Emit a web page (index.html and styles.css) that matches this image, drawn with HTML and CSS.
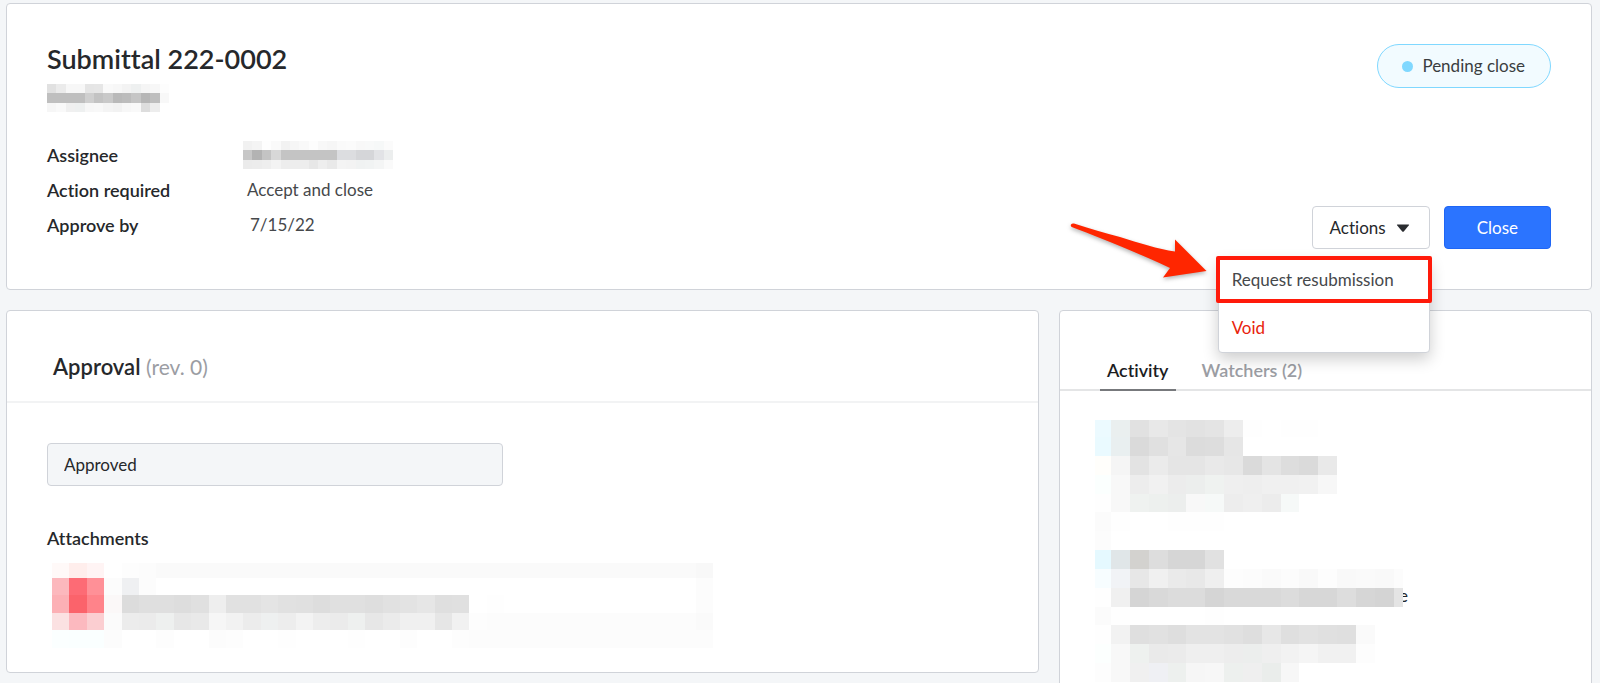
FILE: index.html
```html
<!DOCTYPE html>
<html lang="en">
<head>
<meta charset="utf-8">
<title>Submittal 222-0002</title>
<link rel="stylesheet" href="styles.css">
</head>
<body>
<main class="page">
  <section class="card summary">
    <div class="summary-info">
      <h1 class="title">Submittal 222-0002</h1>
      <svg class="mosaic mosaic-subtitle" viewBox="0 0 13 3" preserveAspectRatio="none" aria-hidden="true" data-rows="e1 eb f7 f7 e5 e6 f9 f7 f3 eef0f0 f5 f7 fd|bf bf bf bf cf c3 c9 b9 bc c5 b6 be f8|f6 f9 f0 eef0f0 f7 f8 f4 f2 f7 f9 dd ed ff"></svg>
      <dl class="facts">
        <dt>Assignee</dt>
        <dd class="fact-assignee"><svg class="mosaic mosaic-assignee" viewBox="0 0 16 3" preserveAspectRatio="none" aria-hidden="true" data-rows="f1 f4 fe fa f2 f6 f9 fd f8 f6 fa fb f8 f8f9f9 f6f8f8 fb|c7 b3 c4 d8 c4 c4 c4 c4 c4 c4 dcdde0 dcdde0 d5d6d9 d5d6d9 e2e3e6 eceeee|eb ec ee f3 ed ed ed e7 ee e9 f4 f3 f0f2f2 f1f3f3 f4f5f5 fa"></svg></dd>
        <dt>Action required</dt>
        <dd class="fact-action">Accept and close</dd>
        <dt>Approve by</dt>
        <dd class="fact-date">7/15/22</dd>
      </dl>
    </div>
    <div class="summary-side">
      <span class="status"><span class="status-dot"></span>Pending close</span>
      <div class="buttons">
        <div class="menu-anchor">
          <button class="btn" type="button" aria-haspopup="true" aria-expanded="true">Actions
            <svg class="caret" viewBox="0 0 14 8" aria-hidden="true"><path d="M1.500 .5h11q1 0 .4.8L8 7.300q-1 1-2 0L1.100 1.300Q.5 .5 1.500 .5z" fill="#2a2c30"/></svg>
          </button>
          <div class="menu" role="menu">
            <button class="menu-item menu-item-marked" type="button" role="menuitem">Request resubmission</button>
            <button class="menu-item menu-item-danger" type="button" role="menuitem">Void</button>
          </div>
          <svg class="arrow" viewBox="0 0 144 64" aria-hidden="true"><path d="M3 4.500Q4 3 6 3.500C22 9 37 13 52 17C71 23 90 29 107 31.500L107 19.500L138.500 51L95 57.500L102 48C89 42 74 35 59 29C42 22 22 14 5 7.500Q2 6.500 3 4.500z" fill="#ff2600"/></svg>
        </div>
        <button class="btn btn-primary" type="button">Close</button>
      </div>
    </div>
  </section>

  <div class="columns">
    <section class="card approval">
      <header class="approval-head"><h2 class="subtitle">Approval <span class="revision">(rev. 0)</span></h2></header>
      <div class="approval-body">
        <input class="field" type="text" value="Approved" aria-label="Approval status" readonly>
        <h3 class="label">Attachments</h3>
        <svg class="mosaic mosaic-file" viewBox="0 0.15 38 4.85" preserveAspectRatio="none" aria-hidden="true" data-rows="fff9f8 ffeeec fff4f4 ff fd fc fa*31 f8|fcb8bd fd6b75 ff9097 fc eff0f2 fc ff*31 fc|fcb0b5 fb636b ff838a fbf8f8 dc df df dd e0 ee e1 e1 e4 e1 e0 dd e0 e0 de e1 e3 e6 df e0 ff fe ff*11 fc|fbe1e2 fcb9bf fbced1 fb ec eb eef0ef e7 e9 f6 f2 ec eef0f0 ed f3 ed eb eef0ef e7 eb f0 f0 e6 f1 fd fc*12 fa|fbffff faffff faffff fc ff ff fd ff ff fc fd ff ff fe ff ff ff fe ff ff fd ff ff fd fc*14"></svg>
      </div>
    </section>

    <section class="card activity">
      <nav class="tabs" role="tablist">
        <button class="tab tab-active" type="button" role="tab" aria-selected="true">Activity</button>
        <button class="tab" type="button" role="tab" aria-selected="false">Watchers (2)</button>
      </nav>
      <div class="feed">
        <span class="feed-tail">e</span>
        <svg class="mosaic mosaic-feed" viewBox="0.15 0.1 16.35 13.9" preserveAspectRatio="none" aria-hidden="true" data-rows="ecfaff eaefef e1 e8 e4 e2 e4 ed fe ff fe fe|eafaff e9eff0 da e0 e6 dc dd e6|fffefb f5 e3 eb e5 e5 e9 e7 da e4 dd da e9|fbfffe f8 ed f1 ec eceeed eff2f0 ef ee f0 f0 f1 f7|fe f8 eff2f0 edf0ee eceeed f8 f6f9f8 ed ef ec f6f9f8|fb fe ff ff fe fe fe|fc|e5f9ff e0e6e8 d3d2cf dd d6 d6 e1|f7fdff f1f3f6 e7 f0 ea e8 ef fd fc fa fc f9 fd f9 fa f9 fc|fe f0 d5 d9 dc dc d5 d9 d9 d9 dc d7 d7 dd d6 d4 e4|fb fe ff ff ff ff fe|fe f2 df e1 de e3 e3 e1 de e7 df e2 e0 df fa|fcfffe f8 eef1ef ea eb ef ef ed eceeed ef f2 f5 f1 f1 fd|fd f8 f0 eff0f4 edf0ee f6 f7 edf0ee ef eaedeb f7"></svg>
      </div>
    </section>
  </div>
</main>
<script src="mosaic.js"></script>
</body>
</html>
```

FILE: styles.css
```css
* { box-sizing: border-box; }

body {
  margin: 0;
  background: #f4f6f8;
  color: #26282b;
  font-family: Lato, "Open Sans", sans-serif;
  font-size: 17px;
  line-height: 24px;
  font-variant-ligatures: none;
}

button, input { font: inherit; color: inherit; }
h1, h2, h3, dl, dd { margin: 0; }

.page {
  height: 100vh;
  overflow: hidden;
  padding: 3px 8px 0 6px;
}

.card {
  background: #fff;
  border: 1px solid #d0d3d9;
  border-radius: 4px;
}

.mosaic { display: block; shape-rendering: crispEdges; }

.summary {
  display: flex;
  justify-content: space-between;
  padding: 40px;
  min-height: 287px;
}

.title {
  font-size: 27px;
  line-height: 30px;
  font-weight: 600;
}

.mosaic-subtitle { width: 122px; height: 28px; margin-top: 10px; }

.facts {
  display: grid;
  grid-template-columns: 196px auto;
  grid-auto-rows: 35px;
  align-items: center;
  margin-top: 25px;
}

.facts dt, .label { font-size: 18px; font-weight: 600; }
.facts dd { color: #46484b; }
.mosaic-assignee { width: 150px; height: 28px; }
.facts .fact-action { padding-left: 4px; }
.facts .fact-date { padding-left: 7px; }

.summary-side {
  display: flex;
  flex-direction: column;
  align-items: flex-end;
  justify-content: space-between;
}

.status {
  display: flex;
  align-items: center;
  gap: 9px;
  height: 44px;
  padding: 0 25px 0 24px;
  border: 1px solid #80d8ff;
  border-radius: 22px;
  background: #f2fbff;
  color: #3a3d40;
}

.status-dot {
  width: 11px;
  height: 11px;
  border-radius: 50%;
  background: #80d8ff;
}

.buttons { display: flex; gap: 14px; }
.menu-anchor { position: relative; }

.btn {
  display: flex;
  align-items: center;
  gap: 10px;
  height: 43px;
  padding: 0 19px 0 17px;
  border: 1px solid #d0d3d9;
  border-radius: 4px;
  background: #fff;
}

.caret { width: 14px; height: 8px; }

.btn-primary {
  padding: 0 32px;
  border-color: #1f66f5;
  background: #2b74ff;
  color: #fff;
}

.menu {
  position: absolute;
  z-index: 2;
  top: 50px;
  right: -2px;
  width: 216px;
  padding: 0 2px;
}

.menu::before {
  content: "";
  position: absolute;
  inset: 2px 2px 0;
  border: 1px solid #d0d3d9;
  border-radius: 4px;
  background: #fff;
  box-shadow: 0 6px 16px rgba(0, 0, 0, .2);
}

.menu-item {
  position: relative;
  display: block;
  width: 100%;
  height: 50px;
  padding: 0 14px;
  border: 0;
  background: none;
  text-align: left;
  color: #46484b;
}

.menu-item-marked {
  width: 216px;
  height: 47px;
  margin-left: -2px;
  border: 4px solid #ff1a0a;
  border-radius: 2px;
  padding: 0 12px;
}

.menu-item-danger { color: #e8230c; }

.arrow {
  position: absolute;
  z-index: 3;
  top: 14px;
  right: 218px;
  width: 144px;
  height: 64px;
  filter: drop-shadow(0 2px 2px rgba(0, 0, 0, .3));
}

.columns {
  display: grid;
  grid-template-columns: 31fr 16fr;
  gap: 20px;
  align-items: start;
  margin-top: 20px;
}

.approval-head {
  padding: 42px 46px 20px;
  border-bottom: 2px solid #f2f3f4;
}

.subtitle {
  font-size: 22px;
  line-height: 28px;
  font-weight: 600;
}

.revision { font-size: 21px; font-weight: 400; color: #9b9da3; }
.approval-body { padding: 40px 40px 24px; }

.field {
  display: block;
  width: 48%;
  height: 43px;
  padding: 0 16px;
  border: 1px solid #d0d3d9;
  border-radius: 4px;
  background: #f4f6f8;
}

.label {
  margin-top: 40px;
  line-height: 24px;
}

.mosaic-file { width: 661px; height: 85px; margin: 13px 0 0 5px; }

.activity { padding-bottom: 40px; }

.tabs {
  display: flex;
  gap: 19px;
  padding: 40px 40px 0;
  border-bottom: 2px solid #e4e5e6;
}

.tab {
  height: 40px;
  margin-bottom: -2px;
  padding: 0 7px;
  border: 0;
  border-bottom: 2px solid transparent;
  background: none;
  font-size: 18px;
  font-weight: 600;
  color: #9b9da3;
}

.tab-active { border-bottom-color: #77797c; color: #1c1d1f; }

.feed { position: relative; padding: 29px 35px 0; }
.mosaic-feed { position: relative; width: 308px; height: 262px; }

.feed-tail {
  position: absolute;
  top: 193px;
  left: 339px;
}
```

FILE: mosaic.js
```js
// Fills each .mosaic svg from its rows of hex cells: "xx" is a grey, "xx*n" repeats a cell.
document.querySelectorAll(".mosaic").forEach(function (svg) {
  svg.dataset.rows.split("|").forEach(function (row, y) {
    var x = 0;
    row.split(" ").forEach(function (token) {
      var parts = token.split("*");
      var hex = parts[0].length === 2 ? parts[0].repeat(3) : parts[0];
      var span = Number(parts[1] || 1);
      var rect = document.createElementNS("http://www.w3.org/2000/svg", "rect");
      rect.setAttribute("x", x);
      rect.setAttribute("y", y);
      rect.setAttribute("width", span);
      rect.setAttribute("height", 1);
      rect.setAttribute("fill", "#" + hex);
      svg.appendChild(rect);
      x += span;
    });
  });
});
```
